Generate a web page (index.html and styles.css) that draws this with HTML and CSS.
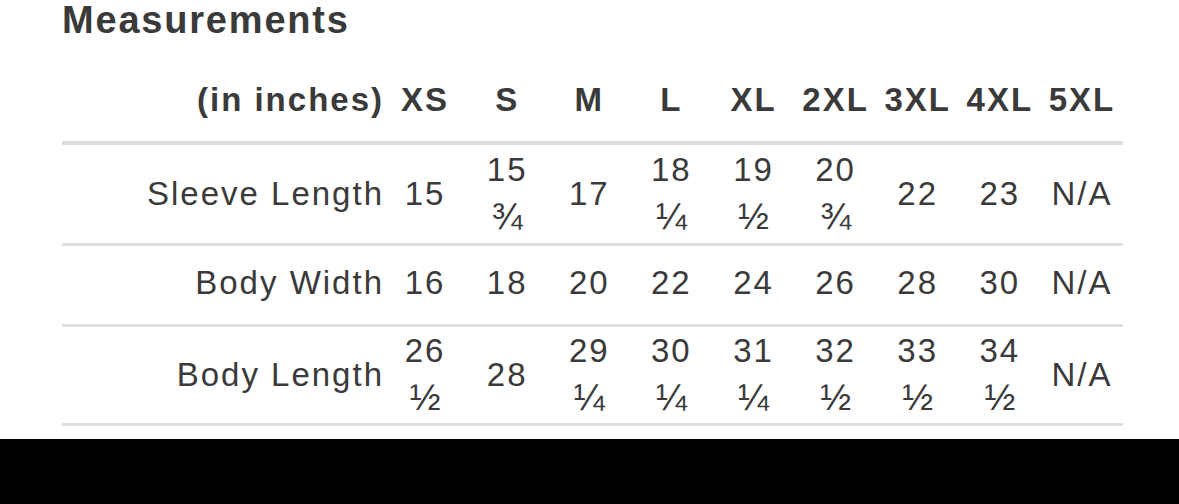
FILE: index.html
```html
<!DOCTYPE html>
<html lang="en">
<head>
<meta charset="utf-8">
<title>Measurements</title>
<link rel="stylesheet" href="styles.css">
</head>
<body>
<main class="sheet">
  <h2 class="title">Measurements</h2>
  <table class="sizes">
    <colgroup>
      <col class="col-label">
      <col span="9">
    </colgroup>
    <thead>
      <tr>
        <th class="label">(in inches)</th>
        <th>XS</th><th>S</th><th>M</th><th>L</th><th>XL</th><th>2XL</th><th>3XL</th><th>4XL</th><th>5XL</th>
      </tr>
    </thead>
    <tbody>
      <tr>
        <td class="label">Sleeve Length</td>
        <td>15</td>
        <td>15 <span class="frac">¾</span></td>
        <td>17</td>
        <td>18 <span class="frac">¼</span></td>
        <td>19 <span class="frac">½</span></td>
        <td>20 <span class="frac">¾</span></td>
        <td>22</td><td>23</td><td>N/A</td>
      </tr>
      <tr class="short">
        <td class="label">Body Width</td>
        <td>16</td><td>18</td><td>20</td><td>22</td><td>24</td><td>26</td><td>28</td><td>30</td><td>N/A</td>
      </tr>
      <tr class="tight">
        <td class="label">Body Length</td>
        <td>26 <span class="frac">½</span></td>
        <td>28</td>
        <td>29 <span class="frac">¼</span></td>
        <td>30 <span class="frac">¼</span></td>
        <td>31 <span class="frac">¼</span></td>
        <td>32 <span class="frac">½</span></td>
        <td>33 <span class="frac">½</span></td>
        <td>34 <span class="frac">½</span></td>
        <td>N/A</td>
      </tr>
    </tbody>
  </table>
</main>
<div class="bottom-bar"></div>
</body>
</html>
```
FILE: styles.css
```css
html, body {
  margin: 0;
  padding: 0;
  height: 100%;
}

body {
  display: flex;
  flex-direction: column;
  background: #ffffff;
  font-family: "Liberation Sans", Arial, Helvetica, sans-serif;
  color: #3a3a3a;
}

.sheet {
  padding: 0 0 13px 62px;
}

.title {
  margin: 0;
  font-size: 38px;
  line-height: 40px;
  font-weight: bold;
  letter-spacing: 1.8px;
  color: #3a3a3a;
}

.sizes {
  width: 1061px;
  table-layout: fixed;
  border-collapse: separate;
  border-spacing: 0;
  font-size: 33px;
  line-height: 48px;
  letter-spacing: 2px;
}

.col-label {
  width: 322px;
}

.sizes th,
.sizes td {
  text-align: center;
  vertical-align: middle;
  padding: 1px 6px;
}

.sizes th {
  font-weight: bold;
  padding-top: 36px;
  padding-bottom: 17px;
  border-bottom: 4px solid #dedee2;
}

.sizes td {
  font-weight: normal;
  border-bottom: 3px solid #e0e0e4;
}

.sizes .label {
  text-align: right;
  padding-right: 0;
}

.sizes tr.short td {
  padding-top: 13px;
  padding-bottom: 17px;
}

.sizes tr.tight td {
  padding-top: 0;
  padding-bottom: 0;
}

.frac {
  font-size: 37px;
  line-height: 0;
  letter-spacing: 0;
}

.bottom-bar {
  flex: 1;
  background: #000000;
}
```
